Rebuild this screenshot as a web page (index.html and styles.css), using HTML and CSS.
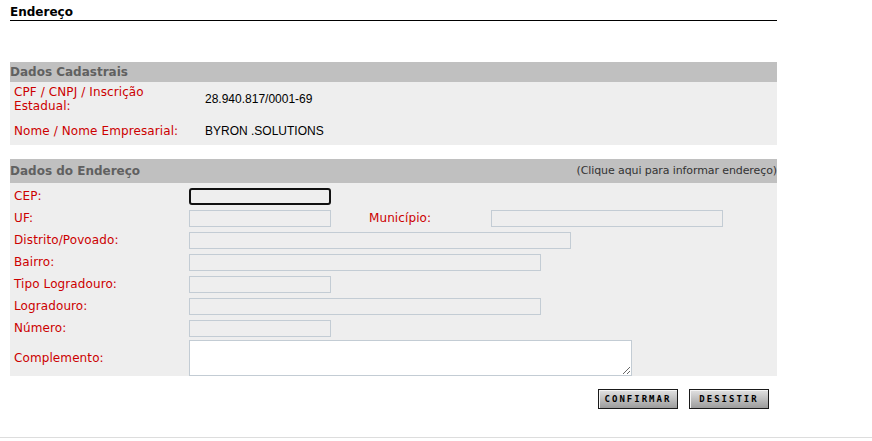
FILE: index.html
```html
<!DOCTYPE html>
<html lang="pt-BR">
<head>
<meta charset="utf-8">
<title>Endereço</title>
<link rel="stylesheet" href="styles.css">
</head>
<body>
<div class="page">
  <div class="title">Endereço</div>

  <div class="section sec-cad">
    <div class="sec-head">Dados Cadastrais</div>
    <div class="sec-body">
      <div class="crow crow-1">
        <div class="clabel">CPF / CNPJ / Inscrição Estadual:</div>
        <div class="cvalue">28.940.817/0001-69</div>
      </div>
      <div class="crow crow-2">
        <div class="clabel">Nome / Nome Empresarial:</div>
        <div class="cvalue">BYRON .SOLUTIONS</div>
      </div>
    </div>
  </div>

  <div class="section sec-end">
    <div class="sec-head head-2">
      <span>Dados do Endereço</span>
      <span class="link">(Clique aqui para informar endereço)</span>
    </div>
    <div class="sec-body body-2">
      <div class="frow">
        <label class="flabel">CEP:</label>
        <input class="field w-s focus" type="text">
      </div>
      <div class="frow">
        <label class="flabel">UF:</label>
        <input class="field w-s" type="text" disabled>
        <label class="flabel mun">Município:</label>
        <input class="field w-mun" type="text" disabled>
      </div>
      <div class="frow">
        <label class="flabel">Distrito/Povoado:</label>
        <input class="field w-l" type="text" disabled>
      </div>
      <div class="frow">
        <label class="flabel">Bairro:</label>
        <input class="field w-m" type="text" disabled>
      </div>
      <div class="frow">
        <label class="flabel">Tipo Logradouro:</label>
        <input class="field w-s" type="text" disabled>
      </div>
      <div class="frow">
        <label class="flabel">Logradouro:</label>
        <input class="field w-m" type="text" disabled>
      </div>
      <div class="frow">
        <label class="flabel">Número:</label>
        <input class="field w-s" type="text" disabled>
      </div>
      <div class="frow frow-area">
        <label class="flabel">Complemento:</label>
        <textarea class="area"></textarea>
      </div>
    </div>
  </div>

  <div class="actions">
    <button class="btn" type="button">CONFIRMAR</button>
    <button class="btn" type="button">DESISTIR</button>
  </div>
</div>
<div class="footer"></div>
</body>
</html>
```

FILE: styles.css
```css
html, body {
  margin: 0;
  padding: 0;
  background: #ffffff;
}

body {
  font-family: "DejaVu Sans", Verdana, sans-serif;
  font-size: 12px;
  color: #000;
}

.page {
  width: 767px;
  padding-left: 10px;
}

.title {
  font-weight: bold;
  font-size: 12px;
  line-height: 15px;
  padding-top: 5px;
  border-bottom: 1px solid #000;
}

.sec-cad {
  margin-top: 41px;
}

.sec-head {
  background: #c0c0c0;
  color: #606060;
  font-weight: bold;
  font-size: 12px;
  height: 20px;
  line-height: 20px;
  padding-left: 0;
}

.head-2 {
  height: 24px;
  line-height: 24px;
  display: flex;
  justify-content: space-between;
}

.head-2 .link {
  font-weight: normal;
  font-size: 11px;
  letter-spacing: -0.1px;
  color: #333;
}

.sec-body {
  background: #eeeeee;
}

.crow {
  display: flex;
  align-items: center;
}

.crow-1 {
  padding: 3px 0 3px;
}

.crow-2 {
  height: 29px;
}

.clabel {
  width: 183px;
  padding: 0 4px;
  color: #cc0000;
  line-height: 14px;
  letter-spacing: 0.1px;
}

.cvalue {
  padding-left: 4px;
  font-family: "Liberation Sans", Tahoma, sans-serif;
  font-size: 12px;
  color: #000;
}

.sec-end {
  margin-top: 14px;
}

.body-2 {
  padding-top: 2px;
}

.frow {
  display: flex;
  align-items: center;
  height: 22px;
}

.flabel {
  width: 175px;
  padding-left: 4px;
  color: #cc0000;
  line-height: 14px;
  letter-spacing: 0.1px;
}

.flabel.mun {
  width: 122px;
  padding-left: 38px;
}

.field {
  box-sizing: border-box;
  height: 17px;
  margin: 0;
  padding: 0 2px;
  border: 1px solid #c3ccd4;
  background: #eeeeee;
  font: inherit;
}

.field.focus {
  border: 2px solid #111;
  border-radius: 3px;
  background: #eeeeee;
  outline: none;
}

.w-s { width: 142px; }
.w-m { width: 352px; }
.w-l { width: 382px; }
.w-mun { width: 232px; }

.frow-area {
  height: 37px;
  align-items: flex-end;
}

.area {
  box-sizing: border-box;
  width: 443px;
  height: 36px;
  margin: 0;
  padding: 2px;
  border: 1px solid #c3ccd4;
  background: #fff;
  resize: both;
  font: inherit;
}

.frow-area .flabel {
  align-self: center;
}

.actions {
  display: flex;
  justify-content: flex-end;
  gap: 11px;
  padding-right: 8px;
  margin-top: 13px;
}

.btn {
  box-sizing: border-box;
  width: 80px;
  height: 20px;
  margin: 0;
  padding: 0;
  border: 1px solid #1a1a1a;
  background: linear-gradient(#e2e2e2, #9c9c9c);
  box-shadow: inset 1px 1px 0 #f4f4f4;
  font-family: "DejaVu Sans Mono", monospace;
  font-weight: bold;
  font-size: 9px;
  letter-spacing: 2px;
  color: #000;
  text-align: center;
}

.footer {
  margin-top: 28px;
  border-top: 1px solid #dddddd;
}
```
